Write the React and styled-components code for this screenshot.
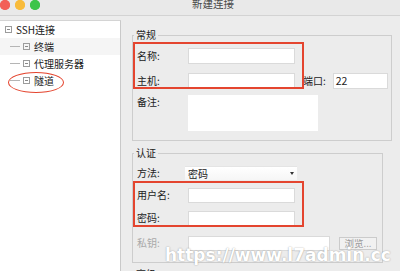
import styled, { createGlobalStyle } from 'styled-components'

const GlobalStyle = createGlobalStyle`
  body {
    margin: 0;
    background: #ececec;
    font-family: "Noto Sans CJK SC", "Noto Sans", sans-serif;
  }
`

const Window = styled.div`
  position: relative;
  width: 400px;
  height: 271px;
  overflow: hidden;
  display: flex;
  flex-direction: column;
  background: #ececec;
`

const TitleBar = styled.div`
  position: relative;
  z-index: 2;
  height: 15px;
  flex-shrink: 0;
  display: flex;
  align-items: flex-start;
  border-bottom: 1px solid #d3d3d3;
  background: #e9e9e9;
`

const Lights = styled.div`
  display: flex;
  flex: none;
  gap: 5px;
  padding-top: 0;
`

const Light = styled.i`
  display: block;
  flex: none;
  width: 10px;
  height: 10px;
  border-radius: 5px;
  box-shadow: inset 0 0 0 5px ${(p) => p.$c};
  background: ${(p) => p.$c};
`

const Title = styled.div`
  margin: -2px 0 0 152px;
  font-size: 10.5px;
  line-height: 12px;
  color: #4a4a4a;
`

const Body = styled.div`
  flex: 1;
  display: flex;
  padding-top: 4px;
`

const TreePanel = styled.div`
  width: 120px;
  background: #fff;
  border-top: 1px solid #d4d4d4;
  border-right: 1px solid #c9c9c9;
`

const TreeRow = styled.div`
  height: 17px;
  display: flex;
  align-items: center;
  padding-left: ${(p) => (p.$child ? 10 : 5)}px;
  background: ${(p) => (p.$shade ? '#f5f5f5' : 'transparent')};
  font-size: 10px;
  color: #222;
`

const Branch = styled.span`
  width: 10px;
  height: 1px;
  background: #b5b5b5;
  margin-right: 3px;
`

const TreeLabel = styled.span`
  margin-left: 4px;
  line-height: 12px;
`

const CollapseIcon = () => (
  <svg width="7" height="7" viewBox="0 0 7 7">
    <rect x="0.5" y="0.5" width="6" height="6" fill="none" stroke="#9c9c9c" />
    <line x1="2" y1="3.5" x2="5" y2="3.5" stroke="#8a8a8a" />
  </svg>
)

const FormPanel = styled.div`
  flex: 1;
  padding: 9px 0 0 11px;
`

const Group = styled.fieldset`
  box-sizing: border-box;
  width: ${(p) => p.$width}px;
  margin: ${(p) => p.$mt || 0}px 0 0 0;
  padding: 0 0 ${(p) => p.$pb || 0}px 0;
  border: 1px solid #cdcdcd;
  min-width: 0;
`

const Legend = styled.legend`
  margin-left: 1px;
  padding: 0 2px;
  font-size: 10px;
  line-height: 12px;
  color: #222;
`

const Row = styled.div`
  display: flex;
  align-items: ${(p) => (p.$top ? 'flex-start' : 'center')};
  height: ${(p) => p.$h || 16}px;
  margin-top: ${(p) => p.$mt}px;
  padding-left: 4px;
`

const Label = styled.span`
  width: 51px;
  flex-shrink: 0;
  font-size: 10px;
  line-height: 12px;
  color: ${(p) => (p.$disabled ? '#a9a9a9' : '#222')};
  margin-top: ${(p) => (p.$top ? 1 : 0)}px;
`

const Input = styled.div`
  box-sizing: border-box;
  width: ${(p) => p.$w}px;
  height: ${(p) => p.$h || 16}px;
  background: #fff;
  border: 1px solid #dadada;
  font-size: 10.5px;
  line-height: 14px;
  padding-left: 2px;
  color: #222;
`

const Note = styled.div`
  width: 130px;
  height: 36px;
  background: #fff;
`

const SideLabel = styled.span`
  margin: 0 7px 0 8px;
  font-size: 10px;
  line-height: 12px;
  color: #222;
`

const Select = styled.div`
  box-sizing: border-box;
  width: 112px;
  height: 14px;
  margin-left: -3px;
  display: flex;
  align-items: center;
  justify-content: space-between;
  padding: 0 3px 0 3px;
  background: linear-gradient(#ffffff, #f6f6f6);
  border-top: 1px solid #e4e4e4;
  font-size: 10px;
  color: #222;
`

const Caret = styled.span`
  width: 0;
  height: 0;
  border-left: 2.5px solid transparent;
  border-right: 2.5px solid transparent;
  border-top: 3px solid #333;
`

const Browse = styled.div`
  box-sizing: border-box;
  width: 38px;
  height: 13px;
  margin-left: 9px;
  border: 1px solid #cbcbcb;
  background: #f1f1f1;
  font-size: 9.5px;
  line-height: 11px;
  color: #9a9a9a;
  text-align: center;
`

const Marker = styled.div`
  position: absolute;
  left: ${(p) => p.$x}px;
  top: ${(p) => p.$y}px;
  width: ${(p) => p.$w}px;
  height: ${(p) => p.$h}px;
  box-sizing: border-box;
  border: ${(p) => (p.$round ? '1.5px' : '2px')} solid #e4452f;
  border-radius: ${(p) => (p.$round ? '50%' : '0')};
  pointer-events: none;
`

const Watermark = styled.div`
  position: absolute;
  left: 165px;
  top: 244px;
  font-family: "DejaVu Sans", sans-serif;
  font-weight: 700;
  font-size: 17px;
  line-height: 22px;
  color: #fff;
  text-shadow: 0 0 1.5px rgba(0, 0, 0, 0.4);
  white-space: nowrap;
`

export default function App() {
  return (
    <>
      <GlobalStyle />
      <Window>
        <TitleBar>
          <Lights>
            <Light $c="#f25f57" />
            <Light $c="#f8bb3b" />
            <Light $c="#3ec449" />
          </Lights>
          <Title>新建连接</Title>
        </TitleBar>
        <Body>
          <TreePanel>
            <TreeRow>
              <CollapseIcon />
              <TreeLabel>SSH连接</TreeLabel>
            </TreeRow>
            <TreeRow $child $shade>
              <Branch />
              <CollapseIcon />
              <TreeLabel>终端</TreeLabel>
            </TreeRow>
            <TreeRow $child>
              <Branch />
              <CollapseIcon />
              <TreeLabel>代理服务器</TreeLabel>
            </TreeRow>
            <TreeRow $child>
              <Branch />
              <CollapseIcon />
              <TreeLabel>隧道</TreeLabel>
            </TreeRow>
          </TreePanel>
          <FormPanel>
            <Group $width={260} $pb={9}>
              <Legend>常规</Legend>
              <Row $mt={7}>
                <Label>名称:</Label>
                <Input $w={107} />
              </Row>
              <Row $mt={9}>
                <Label>主机:</Label>
                <Input $w={107} />
                <SideLabel>端口:</SideLabel>
                <Input $w={55}>22</Input>
              </Row>
              <Row $mt={6} $h={36} $top>
                <Label $top>备注:</Label>
                <Note />
              </Row>
            </Group>
            <Group $width={251} $mt={6} $pb={11}>
              <Legend>认证</Legend>
              <Row $mt={6}>
                <Label>方法:</Label>
                <Select>
                  密码
                  <Caret />
                </Select>
              </Row>
              <Row $mt={6}>
                <Label>用户名:</Label>
                <Input $w={107} $h={15} />
              </Row>
              <Row $mt={7}>
                <Label>密码:</Label>
                <Input $w={107} $h={15} />
              </Row>
              <Row $mt={9}>
                <Label $disabled>私钥:</Label>
                <Input $w={142} $h={15} />
                <Browse>浏览...</Browse>
              </Row>
            </Group>
            <Group $width={251} $mt={5} $pb={20}>
              <Legend>高级</Legend>
            </Group>
          </FormPanel>
        </Body>
        <Marker $x={133} $y={42} $w={171} $h={47} />
        <Marker $x={133} $y={181} $w={171} $h={46} />
        <Marker $x={8} $y={72} $w={56} $h={21} $round />
        <Watermark>https://www.l7admin.cc</Watermark>
      </Window>
    </>
  )
}
